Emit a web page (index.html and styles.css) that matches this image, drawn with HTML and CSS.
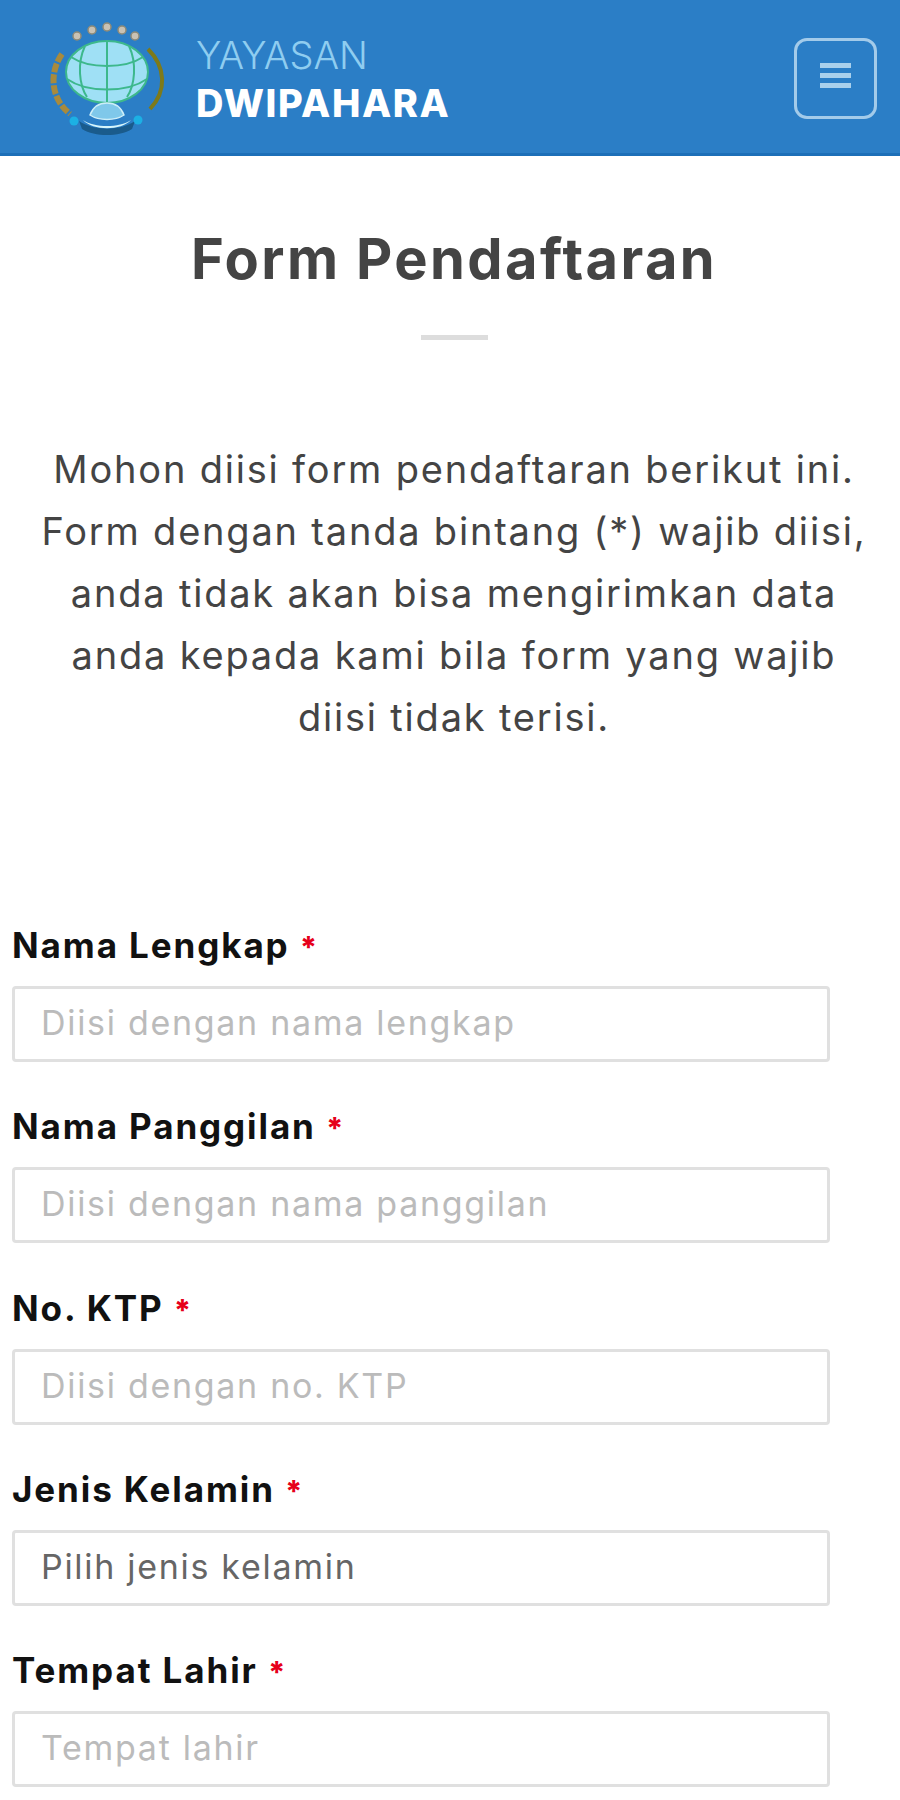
FILE: index.html
```html
<!DOCTYPE html>
<html lang="id">
<head>
  <meta charset="UTF-8">
  <title>Form Pendaftaran - Yayasan Dwipahara</title>
  <link rel="stylesheet" href="styles.css">
</head>
<body>

  <header>
    <div class="brand">
      <svg class="logo" viewBox="0 0 120 120" width="120" height="120">
        <!-- gear dots on top -->
        <g fill="#c9c2b4" stroke="#8d8a78" stroke-width="1.5">
          <circle cx="30" cy="17" r="4"/>
          <circle cx="45" cy="11" r="4"/>
          <circle cx="60" cy="8" r="4"/>
          <circle cx="75" cy="11" r="4"/>
          <circle cx="88" cy="17" r="4"/>
        </g>
        <!-- gold arcs -->
        <path d="M15 35 C3 52 2 78 23 95" fill="none" stroke="#a88a3c" stroke-width="6" stroke-dasharray="9 2"/>
        <path d="M101 30 C119 48 120 72 103 90" fill="none" stroke="#7d7a1a" stroke-width="4"/>
        <!-- globe -->
        <ellipse cx="60" cy="53" rx="41" ry="31" fill="#9fe0f5" stroke="#3db88c" stroke-width="2"/>
        <g fill="none" stroke="#3db88c" stroke-width="2">
          <path d="M60 22 V95"/>
          <path d="M38 27 C30 44 32 66 40 78"/>
          <path d="M82 27 C90 44 88 66 80 78"/>
          <path d="M24 38 C42 50 78 50 96 38"/>
          <path d="M20 60 C40 74 80 74 100 60"/>
        </g>
        <!-- stand -->
        <path d="M43 96 C46 88 52 84 60 84 C68 84 74 88 77 96 C68 102 52 102 43 96 Z" fill="#7fc8ea" stroke="#cdeef8" stroke-width="1.5"/>
        <path d="M32 102 C46 112 74 112 88 102 L85 110 C72 118 48 118 35 110 Z" fill="#1a5b8c"/>
        <path d="M36 101 C48 109 72 109 84 101 C74 112 46 112 36 101 Z" fill="#d6f5fb"/>
        <circle cx="27" cy="102" r="4.5" fill="#1cb0e4"/>
        <circle cx="91" cy="101" r="4.5" fill="#1cb0e4"/>
      </svg>
      <div class="brand-name">
        <span class="brand-top">YAYASAN</span>
        <span class="brand-bottom">DWIPAHARA</span>
      </div>
    </div>
    <button class="menu-toggle" aria-label="Menu">
      <span></span>
      <span></span>
      <span></span>
    </button>
  </header>

  <section class="intro">
    <h1>Form Pendaftaran</h1>
    <div class="divider"></div>
    <p>Mohon diisi form pendaftaran berikut ini. Form dengan tanda bintang (*) wajib diisi, anda tidak akan bisa mengirimkan data anda kepada kami bila form yang wajib diisi tidak terisi.</p>
  </section>

  <form class="form-daftar">
    <div class="field">
      <label for="nama">Nama Lengkap <span class="wajib">*</span></label>
      <input id="nama" type="text" placeholder="Diisi dengan nama lengkap">
    </div>
    <div class="field">
      <label for="panggilan">Nama Panggilan <span class="wajib">*</span></label>
      <input id="panggilan" type="text" placeholder="Diisi dengan nama panggilan">
    </div>
    <div class="field">
      <label for="ktp">No. KTP <span class="wajib">*</span></label>
      <input id="ktp" type="text" placeholder="Diisi dengan no. KTP">
    </div>
    <div class="field">
      <label for="kelamin">Jenis Kelamin <span class="wajib">*</span></label>
      <select id="kelamin">
        <option>Pilih jenis kelamin</option>
      </select>
    </div>
    <div class="field">
      <label for="tempat">Tempat Lahir <span class="wajib">*</span></label>
      <input id="tempat" type="text" placeholder="Tempat lahir">
    </div>
  </form>

</body>
</html>
```

FILE: styles.css
```css
* {
  box-sizing: border-box;
}

body {
  margin: 0;
  font-family: 'Inter', 'Liberation Sans', sans-serif;
  background: #fff;
  color: #444;
  overflow: hidden;
}

header {
  height: 156px;
  background: #2b7ec6;
  border-bottom: 3px solid #1d6fb8;
  padding: 4px 23px 0 47px;
  display: flex;
  justify-content: space-between;
  align-items: center;
}

.brand {
  display: flex;
  align-items: center;
  gap: 29px;
}

.logo {
  display: block;
}

.brand-name {
  display: flex;
  flex-direction: column;
  gap: 4px;
}

.brand-top {
  font-size: 38px;
  line-height: 44px;
  font-weight: 300;
  color: #8fcdf0;
}

.brand-bottom {
  font-size: 38px;
  line-height: 44px;
  font-weight: 800;
  letter-spacing: 1.6px;
  color: #fff;
}

.menu-toggle {
  width: 83px;
  height: 81px;
  background: transparent;
  border: 3px solid #a3cbea;
  border-radius: 13px;
  display: flex;
  flex-direction: column;
  justify-content: center;
  align-items: center;
  gap: 5px;
  padding: 0 0 6px;
}

.menu-toggle span {
  width: 31px;
  height: 5px;
  background: #a9d0ec;
}

.intro {
  padding: 0 22px 0 30px;
  text-align: center;
}

.intro h1 {
  margin: 0;
  padding-top: 73px;
  font-size: 56px;
  line-height: 60px;
  font-weight: 700;
  letter-spacing: 2.4px;
  color: #444;
}

.divider {
  width: 67px;
  height: 5px;
  background: #ddd;
  margin: 46px auto 0;
}

.intro p {
  margin: 0;
  padding-top: 98px;
  font-size: 38px;
  line-height: 62px;
  font-weight: 400;
  letter-spacing: 1.8px;
  color: #444;
}

.form-daftar {
  padding: 0 70px 0 12px;
  margin-top: 176px;
  display: flex;
  flex-direction: column;
  gap: 43.25px;
}

.field label {
  display: block;
  font-size: 35px;
  line-height: 42px;
  font-weight: 700;
  letter-spacing: 1.9px;
  color: #111;
  margin-bottom: 20px;
}

.wajib {
  font-size: 30px;
  line-height: 1;
  font-weight: 800;
  color: #e6001a;
}

.field input,
.field select {
  display: block;
  width: 100%;
  height: 76px;
  padding: 0 26px 3px;
  border: 3px solid #e0e0e0;
  border-radius: 4px;
  background: #fff;
  font-family: inherit;
  font-size: 34px;
  letter-spacing: 1.7px;
  color: #666;
  appearance: none;
}

.field input::placeholder {
  color: #bbb;
  opacity: 1;
}
```
